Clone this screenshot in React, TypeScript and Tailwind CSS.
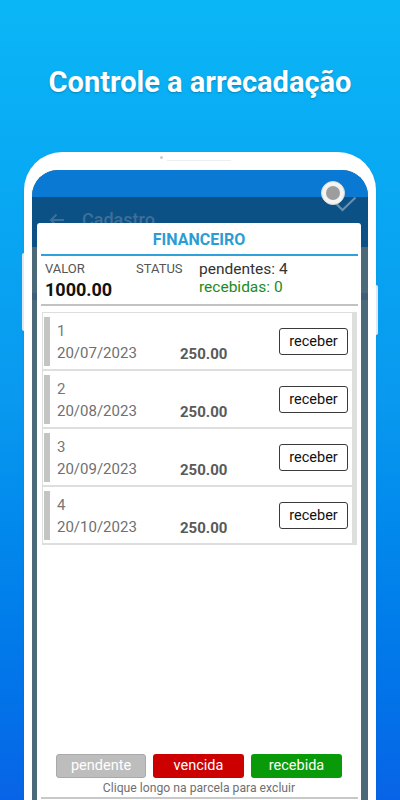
import React from "react";

const rows = [
  { n: "1", d: "20/07/2023" },
  { n: "2", d: "20/08/2023" },
  { n: "3", d: "20/09/2023" },
  { n: "4", d: "20/10/2023" },
];

export default function App() {
  return (
    <div
      className="relative h-[800px] w-[400px] overflow-hidden bg-gradient-to-b from-[#0bb6f6] via-[#0999ef] to-[#0864e6]"
      style={{ fontFamily: "Roboto, 'Noto Sans', Arial, sans-serif" }}
    >
      <h1 className="pt-[65px] text-center text-[29px] font-bold leading-[34px] text-white [text-shadow:0_1px_2px_rgba(0,0,0,0.25)]">
        Controle a arrecadação
      </h1>

      {/* phone */}
      <div className="relative ml-[24px] mt-[53px] h-[700px] w-[352px] rounded-t-[38px] bg-white px-[8px] pt-[18px] shadow-[0_0_2px_rgba(0,0,0,0.08)]">
        {/* speaker */}
        <div className="absolute left-[136px] top-[4px] h-[3px] w-[3px] rounded-full bg-[#c9ccd0]" />
        <div className="absolute left-[143px] top-[8px] h-[1px] w-[64px] bg-[#eceff1]" />
        {/* side buttons */}
        <div className="absolute -left-[2px] top-[101px] h-[78px] w-[2px] rounded-l bg-[#dfe9f3]" />
        <div className="absolute -right-[2px] top-[133px] h-[50px] w-[2px] rounded-r bg-[#dfe9f3]" />

        {/* screen */}
        <div className="relative h-[700px] overflow-hidden rounded-t-[26px] bg-[#4b6979]">
          <div className="h-[27px] bg-[#0a79d3]" />
          <div className="flex h-[50px] items-center bg-[#0b5186] pl-[17px]">
            <svg width="16" height="14" viewBox="0 0 16 14" className="-mt-[4px]">
              <path d="M15 7H2M7.5 1.5L2 7l5.5 5.5" fill="none" stroke="#3f6f99" strokeWidth="2" />
            </svg>
            <span className="ml-[17px] -mt-[6px] text-[18px] font-medium text-[#3f6f99]">Cadastro</span>
            <svg width="22" height="16" viewBox="0 0 22 16" className="ml-auto mr-[11px] -mt-[36px]">
              <path d="M1.5 8l6 6L20.5 1.5" fill="none" stroke="#6b8fab" strokeWidth="2.2" />
            </svg>
          </div>
          <div className="mt-[46px] h-[7px] bg-[#3f5f78]" />

          {/* camera */}
          <div className="absolute left-[289px] top-[11px] flex h-[24px] w-[24px] items-center justify-center rounded-full border border-[#d7d7d7] bg-[#f4f4f4]">
            <div className="h-[14px] w-[14px] rounded-full bg-[#9d9d9d]" />
          </div>

          {/* dialog */}
          <div className="absolute left-[5px] top-[53px] h-[640px] w-[324px] rounded-t-[3px] bg-white">
            <div className="pt-[7px] text-center text-[16px] font-bold leading-[19px] text-[#2b9dd5]">
              FINANCEIRO
            </div>
            <div className="ml-[4px] mr-[3px] mt-[5px] h-[2px] bg-[#2ea1da]" />

            <div className="flex h-[48px] pl-[8px] pt-[5px]">
              <div className="w-[91px]">
                <div className="text-[13px] leading-[15px] text-[#555]">VALOR</div>
                <div className="mt-[3px] text-[18px] font-bold leading-[21px] text-[#111]">1000.00</div>
              </div>
              <div className="w-[63px] text-[13px] leading-[15px] text-[#555]">STATUS</div>
              <div className="-mt-[1.5px]">
                <div className="text-[15.5px] leading-[18.5px] text-[#333]">pendentes: 4</div>
                <div className="text-[15.5px] leading-[18.5px] text-[#1e8a1e]">recebidas: 0</div>
              </div>
            </div>
            <div className="ml-[4px] mr-[3px] h-[2px] bg-[#c2c2c2]" />

            <div className="ml-[5px] mr-[4px] mt-[6px] flex flex-col gap-[2px] bg-[#dedede] pb-[2px] pl-[1px] pr-[5px] pt-[1px]">
              {rows.map((r) => (
                <div key={r.n} className="flex h-[56px] bg-white">
                  <div className="ml-[1px] mt-[4px] h-[49px] w-[6px] bg-[#c4c4c4]" />
                  <div className="ml-[7px] w-[123px] pt-[9px]">
                    <div className="text-[15px] leading-[18px] text-[#777]">{r.n}</div>
                    <div className="mt-[4px] text-[15px] leading-[18px] text-[#707070]">{r.d}</div>
                  </div>
                  <div className="pt-[32px] text-[15px] font-bold leading-[18px] text-[#5a5a5a]">250.00</div>
                  <div className="ml-auto mr-[4px] mt-[15px] flex h-[27px] w-[69px] items-center justify-center rounded-[3px] border border-[#3a3a3a] bg-white text-[14.5px] text-[#111]">
                    receber
                  </div>
                </div>
              ))}
            </div>

            <div className="mt-[209px] flex justify-center gap-[7px]">
              <div className="flex h-[24px] w-[90px] items-center justify-center rounded-[3px] border border-[#a9a9a9] bg-[#bdbdbd] text-[14.5px] text-white">
                pendente
              </div>
              <div className="flex h-[24px] w-[91px] items-center justify-center rounded-[3px] bg-[#cc0000] text-[14.5px] text-white">
                vencida
              </div>
              <div className="flex h-[24px] w-[91px] items-center justify-center rounded-[3px] bg-[#089a08] text-[14.5px] text-white">
                recebida
              </div>
            </div>
            <div className="mt-[2px] text-center text-[12.2px] leading-[16px] text-[#707070]">
              Clique longo na parcela para excluir
            </div>
            <div className="ml-[4px] mr-[3px] mt-[1px] h-[2px] bg-[#c8c8c8]" />
          </div>
        </div>
      </div>
    </div>
  );
}
